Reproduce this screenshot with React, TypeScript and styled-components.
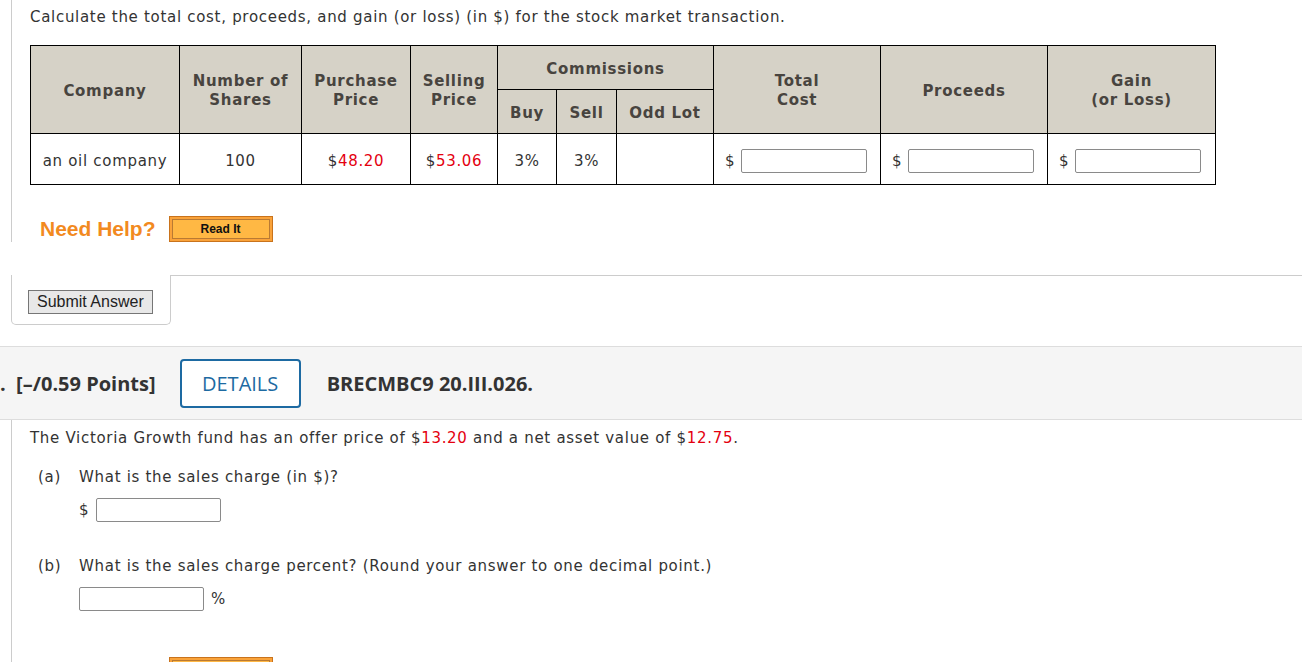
import React from "react";
import styled, { createGlobalStyle } from "styled-components";

const GlobalStyle = createGlobalStyle`
  html, body {
    margin: 0;
    padding: 0;
    background: #fff;
    overflow: hidden;
  }
  body {
    font-family: "DejaVu Sans", Verdana, sans-serif;
    letter-spacing: 0.7px;
    color: #333;
  }
`;

const Page = styled.div`
  width: 1302px;
  height: 662px;
  overflow: hidden;
`;

const QuestionBox = styled.div`
  margin-left: 11px;
  border-left: 1px solid #ccc;
  padding: 7px 0 0 18px;
`;

const Prompt = styled.p`
  margin: 0;
  font-size: 15px;
  line-height: 20px;
  color: #333;
`;

const Red = styled.span`
  color: #e4000f;
`;

const CostTable = styled.table`
  margin-top: 18px;
  border-collapse: collapse;
  table-layout: fixed;
  width: 1186px;
  font-size: 15px;

  th, td {
    border: 1px solid #000;
    text-align: center;
    padding: 0;
  }
`;

const HeadCell = styled.th`
  background: #d6d2c7;
  color: #48443f;
  font-weight: bold;
  line-height: 19px;
  height: 44px;
  padding-top: 3px !important;
  box-sizing: border-box;
`;

const DataCell = styled.td`
  height: 51px;
  color: #333;
  line-height: 20px;
  padding-top: 3px !important;
  box-sizing: border-box;
`;

const MoneyCell = styled.div`
  display: flex;
  align-items: center;
  gap: 6px;
  padding-left: 11px;
`;

const AnswerBox = styled.input<{ $w?: number }>`
  width: ${(p) => p.$w ?? 126}px;
  height: 24px;
  box-sizing: border-box;
  border: 1px solid #8a8a8a;
  border-radius: 2px;
  background: #fff;
  padding: 0 4px;
  font-size: 14px;
`;

const HelpRow = styled.div`
  display: flex;
  align-items: center;
  gap: 13px;
  padding: 31px 0 0 10px;
`;

const NeedHelp = styled.span`
  font-family: "Liberation Sans", Arial, sans-serif;
  font-weight: bold;
  font-size: 21px;
  letter-spacing: 0;
  color: #f28a1f;
`;

const ReadIt = styled.button`
  width: 104px;
  height: 26px;
  box-sizing: border-box;
  background: #ffb844;
  border: 1px solid #c9731c;
  box-shadow: inset 0 0 0 2px #f9a23a, inset 0 0 0 3px #b97a33;
  font-family: "Liberation Sans", Arial, sans-serif;
  font-weight: bold;
  font-size: 12px;
  color: #111;
  padding: 0;
  cursor: pointer;
`;

const FooterRow = styled.div`
  display: flex;
  margin-top: 33px;
`;

const SubmitTab = styled.div`
  width: 160px;
  height: 50px;
  margin-left: 11px;
  border: 1px solid #ccc;
  border-top: none;
  border-radius: 0 0 5px 5px;
  padding: 15px 0 0 16px;
  box-sizing: border-box;
`;

const Filler = styled.div`
  flex: 1;
  border-top: 1px solid #ccc;
`;

const SubmitButton = styled.button`
  height: 24px;
  box-sizing: border-box;
  padding: 0 8px;
  background: #e8e8e8;
  border: 1px solid #767676;
  font-family: "Liberation Sans", Arial, sans-serif;
  font-size: 16px;
  color: #222;
`;

const TopBand = styled.div`
  margin-top: 21px;
  height: 72px;
  background: #f5f5f5;
  border-top: 1px solid #ddd;
  border-bottom: 1px solid #ddd;
  display: flex;
  align-items: center;
  padding-left: 0;
  font-family: "Open Sans", sans-serif;
  font-size: 20px;
  letter-spacing: 0;
`;

const Points = styled.span`
  font-weight: bold;
  color: #333;
  white-space: pre;
`;

const DetailsButton = styled.button`
  margin-left: 24px;
  width: 121px;
  height: 49px;
  box-sizing: border-box;
  background: #fff;
  border: 2px solid #1d6aa2;
  border-radius: 4px;
  color: #1d6aa2;
  font-family: "Open Sans", sans-serif;
  font-size: 20px;
  font-weight: 500;
`;

const Code = styled.span`
  margin-left: 26px;
  font-weight: bold;
  color: #333;
`;

const SecondBox = styled(QuestionBox)`
  padding-top: 8px;
  height: 300px;
`;

const Part = styled.div`
  display: flex;
  margin-top: 19px;
  padding-left: 8px;
  font-size: 15px;
  line-height: 20px;
`;

const PartLabel = styled.span`
  width: 41px;
`;

const PartBody = styled.div`
  display: flex;
  flex-direction: column;
`;

const AnswerLine = styled.div`
  display: flex;
  align-items: center;
  gap: 7px;
  margin-top: 11px;
`;

const Blank = styled.div<{ $h: number }>`
  height: ${(p) => p.$h}px;
`;

const LastHelp = styled(HelpRow)`
  padding-top: 46px;
`;

export default function App() {
  return (
    <Page>
      <GlobalStyle />
      <QuestionBox>
        <Prompt>
          Calculate the total cost, proceeds, and gain (or loss) (in $) for the stock market transaction.
        </Prompt>
        <CostTable>
          <colgroup>
            <col style={{ width: 149 }} />
            <col style={{ width: 122 }} />
            <col style={{ width: 109 }} />
            <col style={{ width: 87 }} />
            <col style={{ width: 59 }} />
            <col style={{ width: 60 }} />
            <col style={{ width: 97 }} />
            <col style={{ width: 167 }} />
            <col style={{ width: 167 }} />
            <col style={{ width: 168 }} />
          </colgroup>
          <thead>
            <tr>
              <HeadCell rowSpan={2}>Company</HeadCell>
              <HeadCell rowSpan={2}>Number of<br />Shares</HeadCell>
              <HeadCell rowSpan={2}>Purchase<br />Price</HeadCell>
              <HeadCell rowSpan={2}>Selling<br />Price</HeadCell>
              <HeadCell colSpan={3}>Commissions</HeadCell>
              <HeadCell rowSpan={2}>Total<br />Cost</HeadCell>
              <HeadCell rowSpan={2}>Proceeds</HeadCell>
              <HeadCell rowSpan={2}>Gain<br />(or Loss)</HeadCell>
            </tr>
            <tr>
              <HeadCell>Buy</HeadCell>
              <HeadCell>Sell</HeadCell>
              <HeadCell>Odd Lot</HeadCell>
            </tr>
          </thead>
          <tbody>
            <tr>
              <DataCell>an oil company</DataCell>
              <DataCell>100</DataCell>
              <DataCell>$<Red>48.20</Red></DataCell>
              <DataCell>$<Red>53.06</Red></DataCell>
              <DataCell>3%</DataCell>
              <DataCell>3%</DataCell>
              <DataCell />
              <DataCell>
                <MoneyCell>$<AnswerBox /></MoneyCell>
              </DataCell>
              <DataCell>
                <MoneyCell>$<AnswerBox /></MoneyCell>
              </DataCell>
              <DataCell>
                <MoneyCell>$<AnswerBox /></MoneyCell>
              </DataCell>
            </tr>
          </tbody>
        </CostTable>
        <HelpRow>
          <NeedHelp>Need Help?</NeedHelp>
          <ReadIt>Read It</ReadIt>
        </HelpRow>
      </QuestionBox>
      <FooterRow>
        <SubmitTab>
          <SubmitButton>Submit Answer</SubmitButton>
        </SubmitTab>
        <Filler />
      </FooterRow>

      <TopBand>
        <Points>.  [–/0.59 Points]</Points>
        <DetailsButton>DETAILS</DetailsButton>
        <Code>BRECMBC9 20.III.026.</Code>
      </TopBand>

      <SecondBox>
        <Prompt>
          The Victoria Growth fund has an offer price of $<Red>13.20</Red> and a net asset value of $<Red>12.75</Red>.
        </Prompt>
        <Part>
          <PartLabel>(a)</PartLabel>
          <PartBody>
            What is the sales charge (in $)?
            <AnswerLine>$<AnswerBox $w={125} /></AnswerLine>
          </PartBody>
        </Part>
        <Blank $h={15} />
        <Part>
          <PartLabel>(b)</PartLabel>
          <PartBody>
            What is the sales charge percent? (Round your answer to one decimal point.)
            <AnswerLine><AnswerBox $w={125} />%</AnswerLine>
          </PartBody>
        </Part>
        <LastHelp>
          <NeedHelp>Need Help?</NeedHelp>
          <ReadIt>Read It</ReadIt>
        </LastHelp>
      </SecondBox>
    </Page>
  );
}
